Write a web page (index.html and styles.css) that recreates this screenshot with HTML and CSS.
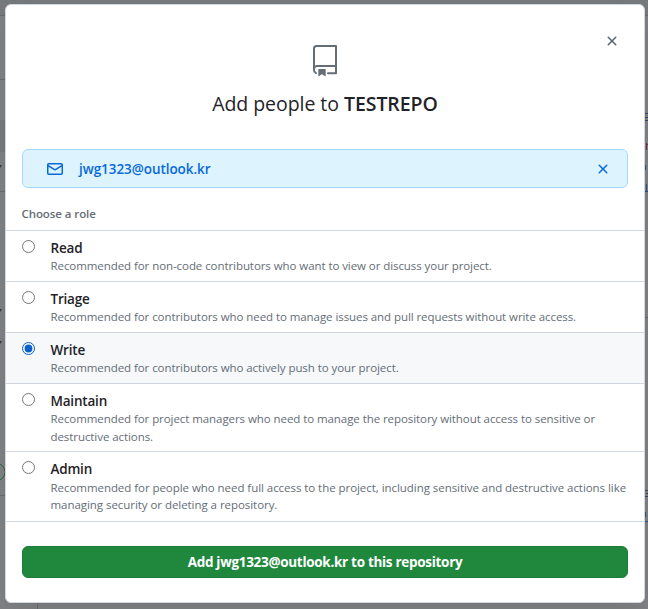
FILE: index.html
```html
<!DOCTYPE html>
<html lang="en">
<head>
<meta charset="utf-8">
<title>Add people</title>
<link rel="stylesheet" href="styles.css">
</head>
<body>
<svg class="backdrop" width="648" height="609" viewBox="0 0 648 609" aria-hidden="true">
  <path fill="#787b7e" d="M0 0h648v15H0z"/>
  <path fill="#787a7c" d="M0 120h6v32H0z"/>
  <path stroke="#696c70" d="M0 15.5h648M0 79.5h6M0 191.5h6M0 495.5h6M37.5 600v9M644 317.5h4"/>
  <path fill="#303336" d="M0 165h2l-2 3zM0 309h2l-2 3zM0 341h2l-2 3z"/>
  <circle cx="-4" cy="472" r="9" fill="none" stroke="#236b35"/>
  <path stroke="#34465f" d="M645 113.5h3M645 117.5h3M645 120.5h3M645 496.5h3"/>
  <path stroke="#702f3b" d="M646.500 143v7M646 144.500h2"/>
  <path stroke="#254f83" d="M645.500 165v5M646.500 184v7M645 191.500h3M645.500 512v5M645 521.500h3"/>
  <path stroke="#424448" d="M645 490.500h3M646 493.500h2"/>
</svg>
<main class="dialog">
  <header class="header">
    <button class="close" aria-label="Close"><svg width="16" height="16" viewBox="0 0 16 16"><path d="M3.720 3.720a.75.75 0 0 1 1.060 0L8 6.940l3.220-3.220a.749.749 0 0 1 1.275.326.749.749 0 0 1-.215.734L9.060 8l3.220 3.220a.749.749 0 0 1-.326 1.275.749.749 0 0 1-.734-.215L8 9.060l-3.220 3.220a.751.751 0 0 1-1.042-.018.751.751 0 0 1-.018-1.042L6.940 8 3.720 4.780a.75.75 0 0 1 0-1.060Z"/></svg></button>
    <svg class="repo" width="32" height="32" viewBox="0 0 24 24"><path d="M3 2.750A2.750 2.750 0 0 1 5.750 0h14.500a.75.75 0 0 1 .75.75v20.500a.75.75 0 0 1-.75.75h-6a.75.75 0 0 1 0-1.500h5.250v-4H6A1.500 1.500 0 0 0 4.500 18v.75c0 .716.430 1.334 1.050 1.605a.75.75 0 0 1-.6 1.374A3.251 3.251 0 0 1 3 18.750ZM19.500 1.500H5.750c-.69 0-1.250.56-1.250 1.250v12.651A2.989 2.989 0 0 1 6 15h13.500Z"/><path d="M7 18.250a.25.25 0 0 1 .25-.25h5a.25.25 0 0 1 .25.25v5.010a.25.25 0 0 1-.397.201l-2.206-1.604a.25.25 0 0 0-.294 0L7.397 23.460a.25.25 0 0 1-.397-.2v-5.010Z"/></svg>
    <h1 class="title">Add people to <strong>TESTREPO</strong></h1>
  </header>
  <div class="invitee">
    <svg width="16" height="16" viewBox="0 0 16 16"><path d="M1.750 2h12.500c.966 0 1.750.784 1.750 1.750v8.500A1.750 1.750 0 0 1 14.250 14H1.750A1.750 1.750 0 0 1 0 12.250v-8.500C0 2.784.784 2 1.750 2ZM1.500 5.809v6.442c0 .138.112.25.25.25h12.500a.25.25 0 0 0 .25-.25V5.809L8.380 9.397a.75.75 0 0 1-.76 0L1.500 5.809Zm13-1.740v-.319a.25.25 0 0 0-.25-.25H1.750a.25.25 0 0 0-.25.25v.319L8 7.880Z"/></svg>
    <span class="email">jwg1323@outlook.kr</span>
    <button class="remove" aria-label="Remove"><svg width="16" height="16" viewBox="0 0 16 16"><path d="M3.720 3.720a.75.75 0 0 1 1.060 0L8 6.940l3.220-3.220a.749.749 0 0 1 1.275.326.749.749 0 0 1-.215.734L9.060 8l3.220 3.220a.749.749 0 0 1-.326 1.275.749.749 0 0 1-.734-.215L8 9.060l-3.220 3.220a.751.751 0 0 1-1.042-.018.751.751 0 0 1-.018-1.042L6.940 8 3.720 4.780a.75.75 0 0 1 0-1.060Z"/></svg></button>
  </div>
  <div class="label"><span>Choose a role</span></div>
  <div class="roles">
    <label class="role"><input type="radio" name="role"><span class="text"><b>Read</b><span class="desc">Recommended for non-code contributors who want to view or discuss your project.</span></span></label>
    <label class="role"><input type="radio" name="role"><span class="text"><b>Triage</b><span class="desc">Recommended for contributors who need to manage issues and pull requests without write access.</span></span></label>
    <label class="role selected"><input type="radio" name="role" checked><span class="text"><b>Write</b><span class="desc">Recommended for contributors who actively push to your project.</span></span></label>
    <label class="role tall"><input type="radio" name="role"><span class="text"><b>Maintain</b><span class="desc">Recommended for project managers who need to manage the repository without access to sensitive or<br>destructive actions.</span></span></label>
    <label class="role last"><input type="radio" name="role"><span class="text"><b>Admin</b><span class="desc">Recommended for people who need full access to the project, including sensitive and destructive actions like<br>managing security or deleting a repository.</span></span></label>
  </div>
  <button class="submit">Add jwg1323@outlook.kr to this repository</button>
</main>
</body>
</html>
```
FILE: styles.css
```css
* { box-sizing: border-box; }
body {
  margin: 0;
  width: 648px;
  height: 609px;
  padding: 4px 3px 6px 5px;
  overflow: hidden;
  background: #828385;
  color: #1f2328;
  font-family: "Open Sans", "Noto Sans", sans-serif;
  font-size: 14px;
}
button { border: 0; padding: 0; background: none; color: inherit; font: inherit; }
svg { display: block; fill: currentColor; flex: none; }
.backdrop { position: absolute; top: 0; left: 0; }
.dialog {
  position: relative;
  width: 640px;
  height: 599px;
  border: 1px solid #d0d7de;
  border-radius: 6px;
  background: #fff;
  box-shadow: 0 8px 24px rgba(66, 74, 83, .25);
  overflow: hidden;
}
.header {
  display: flex;
  flex-direction: column;
  align-items: center;
  height: 144px;
  padding-top: 40px;
}
.close { position: absolute; top: 28px; right: 24px; color: #59636e; }
.repo { color: #656d76; }
.title {
  margin: 12px 0 0;
  font-size: 19.500px;
  line-height: 30px;
  font-weight: 400;
  letter-spacing: -.05px;
  white-space: nowrap;
}
.title strong { font-weight: 600; }
.invitee {
  display: flex;
  align-items: center;
  height: 39px;
  margin: 0 16px;
  padding: 0 16px 0 24px;
  border: 1px solid #a5d8ff;
  border-radius: 6px;
  background: #ddf4ff;
  color: #0969da;
}
.email { margin-left: 16px; font-weight: 600; font-size: 13.500px; line-height: 20px; letter-spacing: -.06px; }
.remove { margin-left: auto; }
.label {
  height: 43px;
  padding: 17px 15.500px 0;
  border-bottom: 1px solid #d0d7de;
  color: #656d76;
  font-size: 11.500px;
  line-height: 18px;
  font-weight: 600;
  letter-spacing: -.08px;
}
.role {
  display: flex;
  height: 51px;
  padding: 8px 16px 0;
  border-bottom: 1px solid #d0d7de;
}
.selected { background: #f6f8fa; }
.tall { height: 68px; }
.last { height: 70px; }
.role input { width: 13px; height: 13px; margin: 1px 15.500px 0 0; flex: none; accent-color: #0860ca; }
.text { display: flex; flex-direction: column; }
.text b { font-size: 13.500px; line-height: 19px; font-weight: 600; letter-spacing: -.2px; }
.desc { margin-top: -1px; color: #656d76; font-size: 11.500px; line-height: 17.500px; letter-spacing: -.07px; white-space: nowrap; }
.last .desc { margin-top: 0; line-height: 17px; letter-spacing: -.05px; }
.submit {
  display: block;
  width: 606px;
  height: 32px;
  margin: 24px 16px 0;
  border: 1px solid #1f7c3a;
  border-radius: 6px;
  background: #1f883d;
  color: #fff;
  font-size: 13.500px;
  font-weight: 700;
  letter-spacing: -.3px;
}
```
